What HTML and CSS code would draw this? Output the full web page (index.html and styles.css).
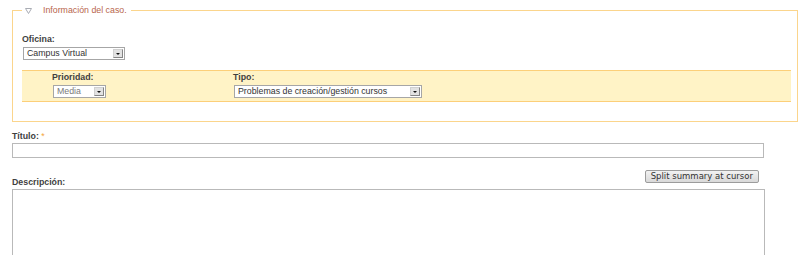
FILE: index.html
```html
<!DOCTYPE html>
<html lang="es">
<head>
    <meta charset="UTF-8">
    <title>Nuevo caso</title>
    <link rel="stylesheet" href="styles.css">
</head>
<body>
    <div class="page">
        <fieldset class="case">
            <legend class="case-legend">
                <svg class="toggle" width="7" height="6" viewBox="0 0 7 6"><polygon points="0.5,0.5 6.5,0.5 3.5,5.5" fill="none" stroke="#a9acb4" stroke-width="1"/></svg>
                <span>Información del caso.</span>
            </legend>

            <div class="field">
                <label class="label">Oficina:</label>
                <div class="select select-office">
                    <span class="select-text">Campus Virtual</span>
                    <span class="select-arrow"></span>
                </div>
            </div>

            <div class="band">
                <div class="band-col band-col-first">
                    <label class="label">Prioridad:</label>
                    <div class="select select-priority">
                        <span class="select-text muted">Media</span>
                        <span class="select-arrow"></span>
                    </div>
                </div>
                <div class="band-col">
                    <label class="label">Tipo:</label>
                    <div class="select select-type">
                        <span class="select-text">Problemas de creación/gestión cursos</span>
                        <span class="select-arrow"></span>
                    </div>
                </div>
            </div>
        </fieldset>

        <div class="field field-title">
            <label class="label">Título: <span class="required">*</span></label>
            <input class="text-input" type="text">
        </div>

        <div class="desc-head">
            <label class="label label-desc">Descripción:</label>
            <button class="split-btn" type="button">Split summary at cursor</button>
        </div>
        <textarea class="desc-input"></textarea>
    </div>
</body>
</html>
```

FILE: styles.css
```css
* {
    box-sizing: border-box;
}

body {
    margin: 0;
    background: #fff;
    font-family: "Liberation Sans", Arial, sans-serif;
    font-size: 8.8px;
    line-height: 11px;
    color: #3c3c3c;
    overflow: hidden;
}

.page {
    padding: 5px 0 0 12px;
}

/* case info box */
.case {
    margin: 0;
    width: 786px;
    min-width: 0;
    border: 1px solid #fbd58c;
    padding: 18px 6px 19px 9px;
}

.case-legend {
    padding: 0 4px 0 2px;
    color: #b8654c;
    line-height: 11px;
    display: flex;
    align-items: center;
}

.toggle {
    display: block;
    margin: 1px 11px 0 1px;
}

.label {
    display: block;
    font-weight: bold;
    color: #3f3f3f;
}

.required {
    color: #f3a43a;
    font-weight: normal;
}

/* fake select boxes */
.select {
    display: flex;
    align-items: center;
    height: 13px;
    margin: 2px 0 0 1px;
    border: 1px solid #a6a6a6;
    background: #fff;
}

.select-text {
    flex: 1;
    padding-left: 3px;
    color: #333;
    white-space: nowrap;
    overflow: hidden;
}

.select-text.muted {
    color: #7a7a7a;
}

.select-arrow {
    position: relative;
    width: 10px;
    height: 9px;
    margin-right: 1px;
    border: 1px solid;
    border-color: #d0d0d0 #858585 #858585 #d0d0d0;
    background: #e2e2e2;
}

.select-arrow::after {
    content: '';
    position: absolute;
    left: 2px;
    top: 3px;
    border-left: 2px solid transparent;
    border-right: 2px solid transparent;
    border-top: 2px solid #111;
}

.select-office { width: 102px; }
.select-priority { width: 53px; }
.select-type { width: 188px; }

.band {
    display: flex;
    margin-top: 10px;
    padding: 1px 0 3px 30px;
    border-top: 1px solid #fccf79;
    border-bottom: 1px solid #fccf79;
    background: #fff3c6;
}

.band-col-first {
    width: 181px;
}

/* ticket fields */
.field-title {
    margin-top: 9px;
}

.text-input {
    display: block;
    width: 752px;
    height: 15px;
    margin: 1px 0 0;
    border: 1px solid #b9b9b9;
    background: #fff;
    padding: 0;
}

.desc-head {
    display: flex;
    justify-content: space-between;
    align-items: flex-start;
    width: 753px;
    margin-top: 12px;
}

.label-desc {
    margin-top: 7px;
}

.split-btn {
    height: 13px;
    margin-right: 6px;
    padding: 0 5px;
    border: 1px solid #9c9c9c;
    border-radius: 2px;
    background: linear-gradient(180deg, #f2f2f2 0%, #d9d9d9 100%);
    font-family: "DejaVu Sans", Verdana, sans-serif;
    font-size: 8.5px;
    line-height: 11px;
    color: #333;
}

.desc-input {
    display: block;
    width: 753px;
    height: 90px;
    margin: 1px 0 0;
    border: 1px solid #b9b9b9;
    padding: 0;
    resize: none;
}
```
